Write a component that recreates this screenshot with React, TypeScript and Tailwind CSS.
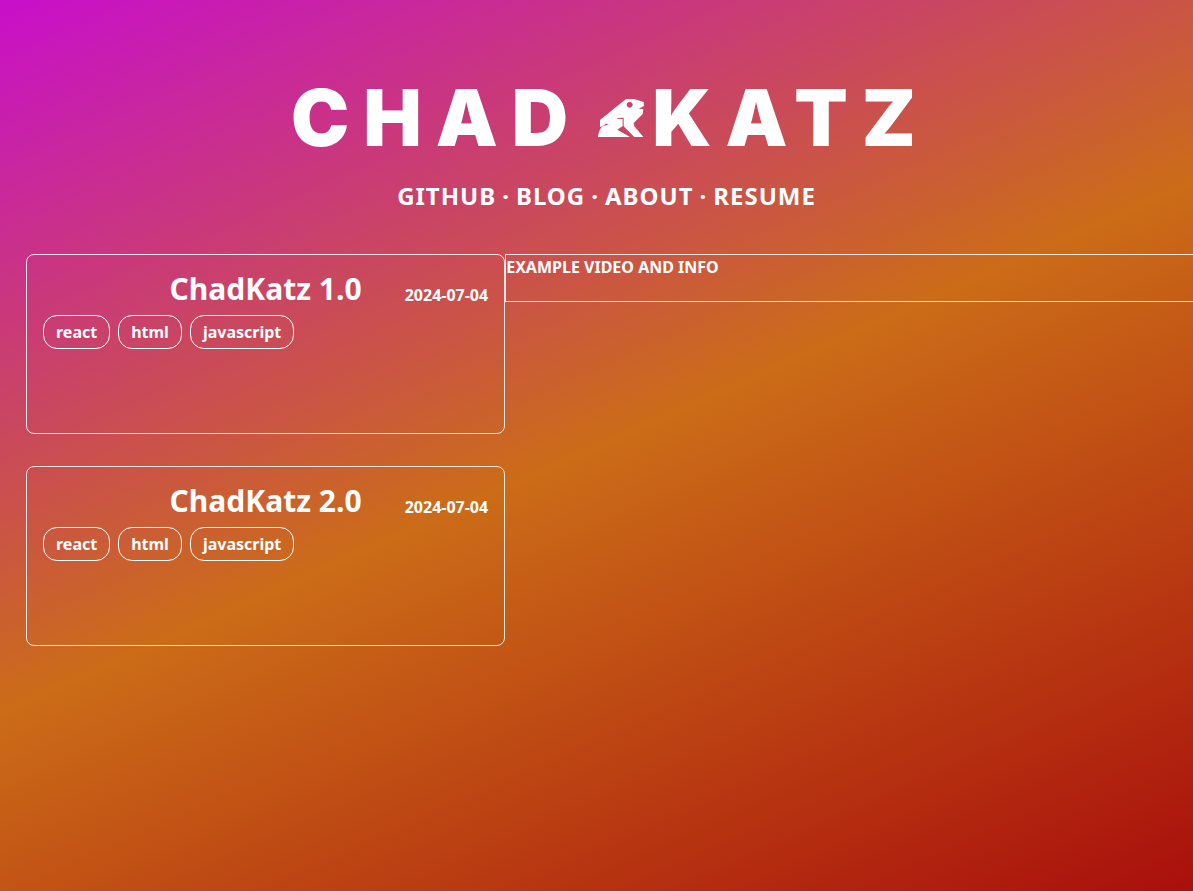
const projects = [
  { title: "ChadKatz 1.0", date: "2024-07-04", tags: ["react", "html", "javascript"] },
  { title: "ChadKatz 2.0", date: "2024-07-04", tags: ["react", "html", "javascript"] },
];

const links = ["GITHUB", "BLOG", "ABOUT", "RESUME"];

function Frog() {
  return (
    <svg viewBox="0 0 138 114" className="h-[38px] w-[46px]" fill="currentColor" aria-hidden="true">
      <path
        fillRule="evenodd"
        d="M84 0 L109 0 L137 9 L138 21 L122 29 L136 30 L134 45 L107 72 L109 82 L136 114 L109 114 L77 82 L77 56 L57 57 L58 59 L74 60 L74 81 L58 92 L96 114 L0 114 Q2 91 15 80 L33 77 L24 74 L6 85 L6 63 Z M95 8 a9 9 0 1 0 0.1 0 Z"
      />
    </svg>
  );
}

function ProjectCard({ title, date, tags }: (typeof projects)[number]) {
  return (
    <article className="h-[180px] rounded-lg border border-white/85 p-4">
      <div className="grid grid-cols-[1fr_auto_1fr] items-end">
        <h2 className="col-start-2 text-[30px] leading-9">{title}</h2>
        <time className="text-right leading-6" dateTime={date}>{date}</time>
      </div>
      <ul className="mt-2 flex gap-2">
        {tags.map((tag) => (
          <li key={tag} className="rounded-[14px] border border-white px-3 py-1 leading-6">{tag}</li>
        ))}
      </ul>
    </article>
  );
}

export default function App() {
  return (
    <div className="min-h-screen overflow-x-hidden bg-[linear-gradient(156deg,#c80fcb_0%,#cb6c18_50%,#a90f0c_100%)] font-['Noto_Sans',sans-serif] text-base font-bold text-white">
      <header className="flex flex-col items-center pt-[70px]">
        <h1 className="flex items-center pl-7 font-[Inter,sans-serif] text-[78px] leading-[96px] font-black tracking-[14px]">
          <span>CHAD</span>
          <span className="mr-2 ml-4"><Frog /></span>
          <span>KATZ</span>
        </h1>
        <nav className="mt-3 flex gap-1.5 pl-5 text-2xl leading-9 tracking-[1px]">
          {links.map((link, i) => (
            <span key={link} className="flex gap-1.5">
              {i > 0 && <span>·</span>}
              <a href="#projects">{link}</a>
            </span>
          ))}
        </nav>
      </header>
      <main id="projects" className="mt-10 -mr-4 ml-[26px] grid grid-cols-[calc(40%+6px)_1fr] items-start">
        <section className="flex flex-col gap-8">
          {projects.map((project) => (
            <ProjectCard key={project.title} {...project} />
          ))}
        </section>
        <aside className="h-12 border border-white/85 leading-6">EXAMPLE VIDEO AND INFO</aside>
      </main>
    </div>
  );
}
